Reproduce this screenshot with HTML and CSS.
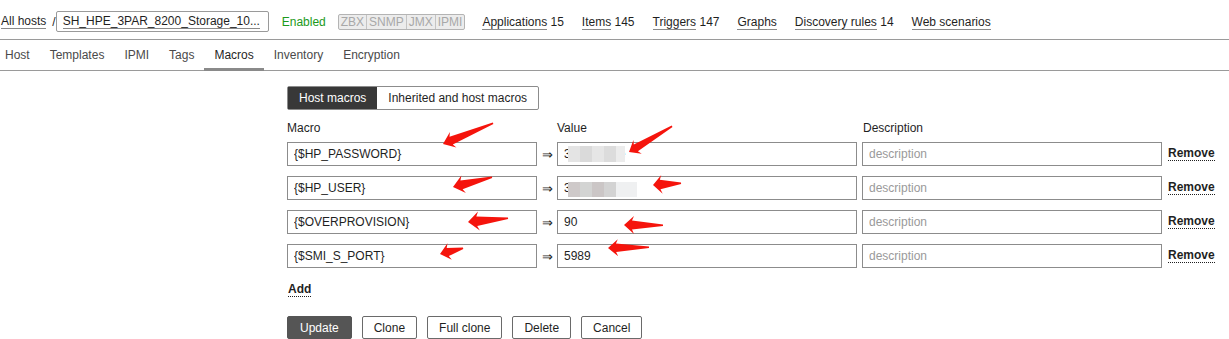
FILE: index.html
```html
<!DOCTYPE html>
<html lang="en">
<head>
    <meta charset="UTF-8">
    <title>Host macros</title>
    <link rel="stylesheet" href="styles.css">
</head>
<body>
    <div class="header">
        <a class="link" href="#">All hosts</a>
        <span class="slash">/</span>
        <span class="host-box"><a class="link" href="#">SH_HPE_3PAR_8200_Storage_10...</a></span>
        <span class="status-on">Enabled</span>
        <span class="avail">
            <span class="avail-tag">ZBX</span><span class="avail-tag">SNMP</span><span class="avail-tag">JMX</span><span class="avail-tag">IPMI</span>
        </span>
        <nav class="host-nav">
            <span><a class="link" href="#">Applications</a> 15</span>
            <span><a class="link" href="#">Items</a> 145</span>
            <span><a class="link" href="#">Triggers</a> 147</span>
            <span><a class="link" href="#">Graphs</a></span>
            <span><a class="link" href="#">Discovery rules</a> 14</span>
            <span><a class="link" href="#">Web scenarios</a></span>
        </nav>
    </div>

    <ul class="tabs">
        <li>Host</li>
        <li>Templates</li>
        <li>IPMI</li>
        <li>Tags</li>
        <li class="active">Macros</li>
        <li>Inventory</li>
        <li>Encryption</li>
    </ul>

    <div class="form">
        <div class="switch">
            <span class="switch-item selected">Host macros</span><span class="switch-item">Inherited and host macros</span>
        </div>

        <div class="macros">
            <div class="col-head">Macro</div>
            <div></div>
            <div class="col-head">Value</div>
            <div class="col-head">Description</div>
            <div></div>

            <input class="field macro" value="{$HP_PASSWORD}">
            <span class="arrow">&rArr;</span>
            <div class="value-cell">
                <input class="field value" value="3xxxxxxxxe">
                <span class="blur blur-a"></span>
            </div>
            <input class="field desc" placeholder="description">
            <a class="action" href="#">Remove</a>

            <input class="field macro" value="{$HP_USER}">
            <span class="arrow">&rArr;</span>
            <div class="value-cell">
                <input class="field value" value="3xxxxxxxxx">
                <span class="blur blur-b"></span>
            </div>
            <input class="field desc" placeholder="description">
            <a class="action" href="#">Remove</a>

            <input class="field macro" value="{$OVERPROVISION}">
            <span class="arrow">&rArr;</span>
            <div class="value-cell">
                <input class="field value" value="90">
            </div>
            <input class="field desc" placeholder="description">
            <a class="action" href="#">Remove</a>

            <input class="field macro" value="{$SMI_S_PORT}">
            <span class="arrow">&rArr;</span>
            <div class="value-cell">
                <input class="field value" value="5989">
            </div>
            <input class="field desc" placeholder="description">
            <a class="action" href="#">Remove</a>
        </div>

        <a class="action add" href="#">Add</a>

        <div class="buttons">
            <button class="btn primary">Update</button>
            <button class="btn">Clone</button>
            <button class="btn">Full clone</button>
            <button class="btn">Delete</button>
            <button class="btn">Cancel</button>
        </div>
    </div>

    <svg class="marks" id="marks" width="1229" height="339"></svg>

    <script>
        // red pointer arrows drawn over the screenshot: tip x/y, tail x/y, head length, head half width
        const arrows = [
            [443, 144, 493, 123, 11, 8.5],
            [453, 187, 492, 177, 11, 9],
            [468, 222, 508, 218, 11, 9.5],
            [440, 254, 463, 248, 10, 8.5],
            [629, 152, 672, 126, 10, 8],
            [653, 185, 681, 183, 9, 9.5],
            [624, 225, 663, 225, 10, 9],
            [608, 248, 649, 247, 10, 8.5]
        ];

        const svg = document.getElementById("marks");

        arrows.forEach(function (a) {
            const tipX = a[0], tipY = a[1], tailX = a[2], tailY = a[3];
            const len = Math.hypot(tailX - tipX, tailY - tipY);
            const dx = (tailX - tipX) / len, dy = (tailY - tipY) / len;
            const nx = -dy, ny = dx;
            const head = a[4], half = a[5], shaft = half * 0.5;

            const pts = [
                [tipX, tipY],
                [tipX + dx * head + nx * half, tipY + dy * head + ny * half],
                [tipX + dx * head * 0.8 + nx * shaft, tipY + dy * head * 0.8 + ny * shaft],
                [tailX + nx * 1, tailY + ny * 1],
                [tailX - nx * 0.5, tailY - ny * 0.5],
                [tipX + dx * head * 0.8 - nx * shaft, tipY + dy * head * 0.8 - ny * shaft],
                [tipX + dx * head - nx * half, tipY + dy * head - ny * half]
            ];

            const poly = document.createElementNS("http://www.w3.org/2000/svg", "polygon");
            poly.setAttribute("points", pts.map(function (p) { return p[0].toFixed(1) + "," + p[1].toFixed(1); }).join(" "));
            poly.setAttribute("fill", "#f5140c");
            svg.appendChild(poly);
        });
    </script>
</body>
</html>
```

FILE: styles.css
```css
body {
    margin: 0;
    font-family: "Liberation Sans", Arial, sans-serif;
    font-size: 12px;
    color: #1f1f1f;
    background-color: #ffffff;
    position: relative;
}

.link {
    color: #1f1f1f;
    text-decoration: none;
    border-bottom: 1px solid #8a8a8a;
}

/* header */

.header {
    display: flex;
    align-items: center;
    height: 40px;
    padding: 4px 0 0 1px;
    border-bottom: 1px solid #9a9a9a;
    box-sizing: border-box;
}

.slash {
    margin: 0 0 0 6px;
}

.host-box {
    display: inline-block;
    width: 213px;
    height: 21px;
    line-height: 19px;
    padding-left: 6px;
    border: 1px solid #9a9a9a;
    border-radius: 2px;
    box-sizing: border-box;
}

.status-on {
    color: #1c9a1c;
    margin-left: 13px;
}

.avail {
    display: inline-flex;
    margin-left: 12px;
    border: 1px solid #b4b4b4;
    border-radius: 2px;
    background-color: #ececec;
}

.avail-tag {
    color: #a8a8a8;
    padding: 0 2px;
    line-height: 14px;
    border-left: 1px solid #c4c4c4;
}

.avail-tag:first-child {
    border-left: none;
}

.host-nav {
    display: flex;
    gap: 18px;
    margin-left: 17px;
}

/* tabs */

.tabs {
    display: flex;
    list-style: none;
    margin: 0;
    padding: 0;
    height: 31px;
    border-bottom: 1px solid #9a9a9a;
    box-sizing: border-box;
}

.tabs li {
    padding: 0 10px;
    line-height: 30px;
    color: #4a4a4a;
    border-bottom: 3px solid transparent;
    height: 31px;
    box-sizing: border-box;
    margin-bottom: -1px;
}

.tabs li:first-child {
    padding-left: 5px;
}

.tabs li.active {
    color: #1f1f1f;
    border-bottom-color: #8a8a8a;
}

/* form */

.form {
    padding: 15px 0 0 287px;
}

.switch {
    display: inline-flex;
    border: 1px solid #8c8c8c;
    border-radius: 2px;
    height: 24px;
    box-sizing: border-box;
}

.switch-item {
    padding: 0 11px;
    line-height: 22px;
    color: #1f1f1f;
}

.switch-item.selected {
    background-color: #383838;
    color: #ffffff;
}

.macros {
    display: grid;
    grid-template-columns: 250px 20px 300px 305px auto;
    grid-template-rows: 11px repeat(4, 24px);
    row-gap: 10px;
    align-items: center;
    margin-top: 11px;
}

.col-head {
    line-height: 14px;
    align-self: start;
}

.macros > .col-head:nth-child(4) {
    margin-left: 6px;
}

.field {
    font-family: "Liberation Sans", Arial, sans-serif;
    font-size: 12px;
    color: #1f1f1f;
    height: 24px;
    padding: 0 6px;
    border: 1px solid #8c8c8c;
    box-sizing: border-box;
    outline: none;
    background-color: #ffffff;
}

.field::placeholder {
    color: #9a9a9a;
}

.macro {
    width: 250px;
}

.arrow {
    font-size: 13px;
    padding-left: 5px;
}

.value-cell {
    position: relative;
    height: 24px;
}

.value {
    width: 300px;
}

.desc {
    width: 300px;
    margin-left: 5px;
}

/* masked values in the screenshot */
.blur {
    position: absolute;
    left: 11px;
    height: 16px;
}

.blur-a {
    top: 4px;
    width: 57px;
    background: linear-gradient(90deg, #e4e4e4 0 12px, #dadada 12px 24px, #e6e6e6 24px 36px, #dcdcdc 36px 48px, #ececec 48px);
}

.blur-b {
    top: 6px;
    height: 15px;
    width: 69px;
    background: linear-gradient(90deg, #cec9c9 0 12px, #d3d4d3 12px 24px, #cbc6c6 24px 36px, #d3d3d3 36px 48px, #eff0f1 48px);
}

.action {
    color: #1f1f1f;
    font-weight: bold;
    text-decoration: none;
    border-bottom: 1px dotted #1f1f1f;
    justify-self: start;
    margin-left: 6px;
    line-height: 13px;
}

.add {
    display: inline-block;
    margin: 15px 0 0 1px;
}

.buttons {
    display: flex;
    gap: 10px;
    margin-top: 19px;
}

.btn {
    font-family: "Liberation Sans", Arial, sans-serif;
    font-size: 12px;
    color: #1f1f1f;
    background-color: #ffffff;
    border: 1px solid #6a6a6a;
    border-radius: 2px;
    height: 23px;
    padding: 0 11px;
}

.btn.primary {
    background-color: #555555;
    border-color: #555555;
    color: #ffffff;
    padding: 0 12px;
}

.marks {
    position: absolute;
    top: 0;
    left: 0;
    pointer-events: none;
}
```
